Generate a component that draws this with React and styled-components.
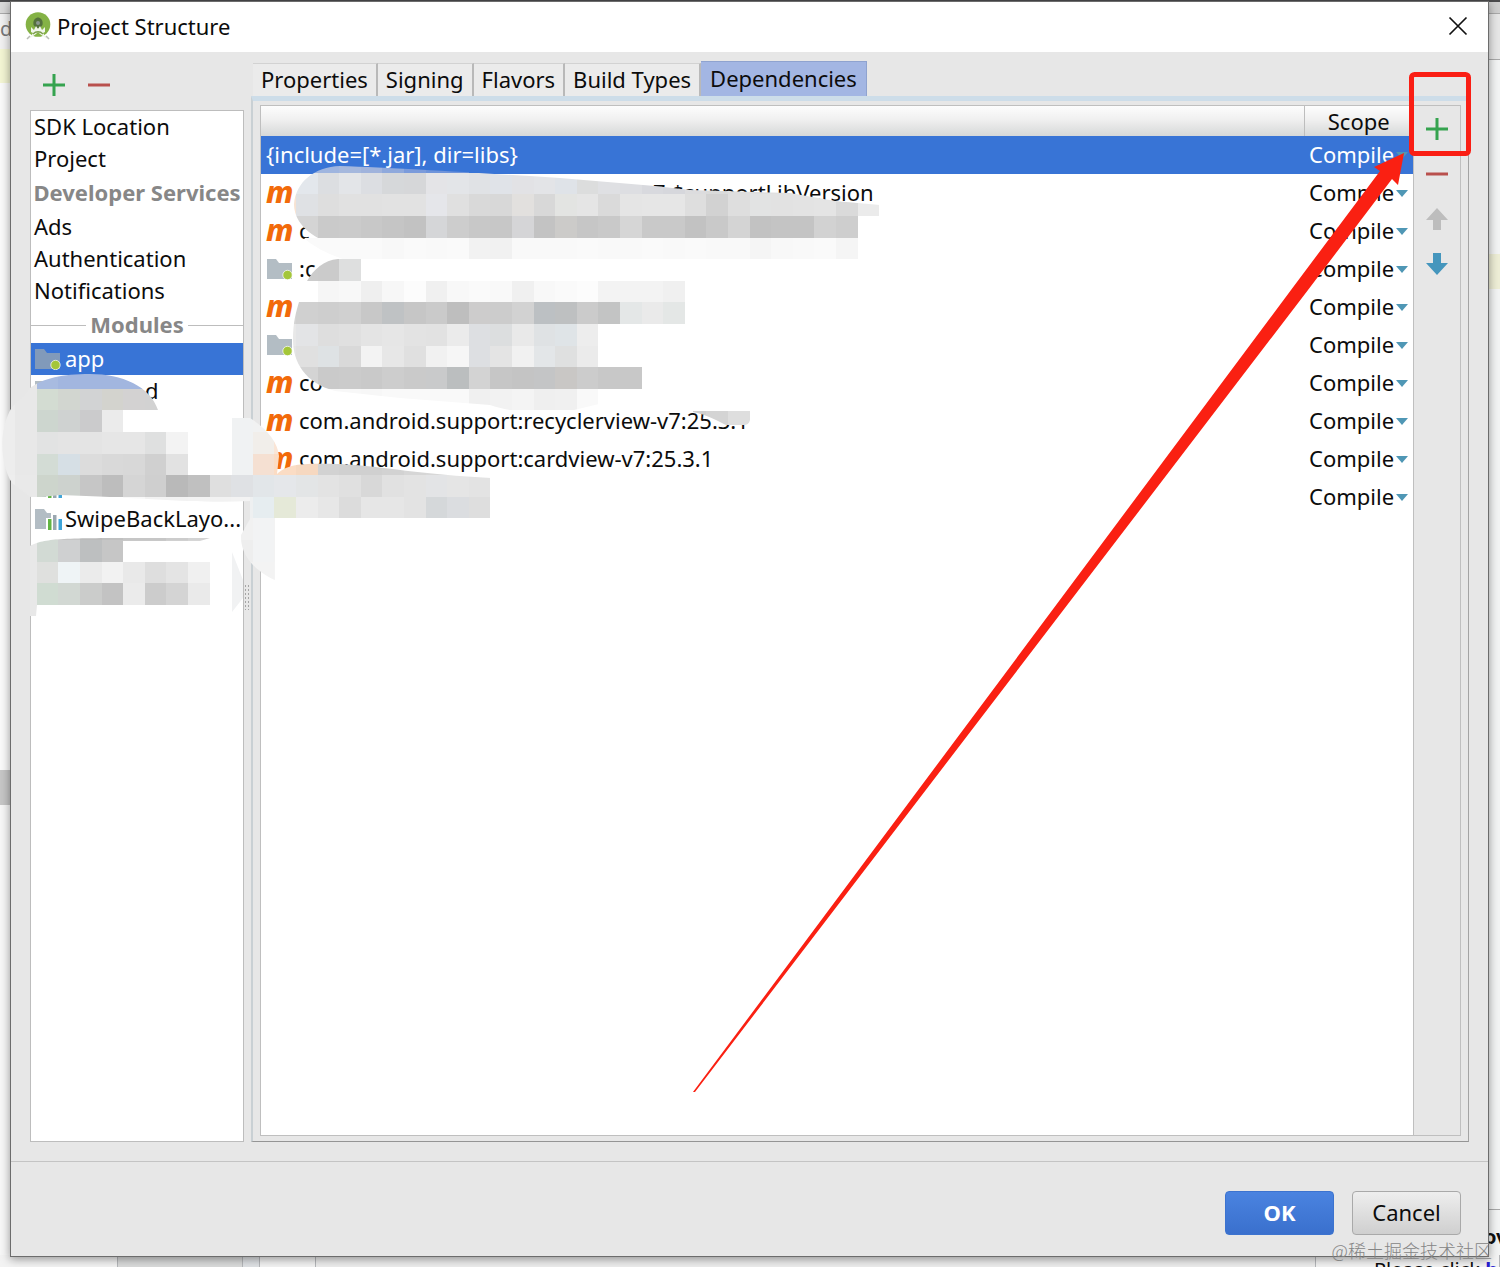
import styled, { createGlobalStyle, css } from "styled-components";
import { useState } from "react";

const CELL = 21.6;
const CELL_LEFT = 36.8;

const tabs = ["Properties", "Signing", "Flavors", "Build Types", "Dependencies"];

const services = ["Ads", "Authentication", "Notifications"];

const modules = [
  { id: "app", name: "app", icon: "app" },
  { id: "hidden-1", name: "d", icon: "lib", indent: 80 },
  { id: "hidden-2" },
  { id: "hidden-3" },
  { id: "hidden-4", icon: "lib" },
  { id: "swipe", name: "SwipeBackLayo...", icon: "lib" },
];

const dependencies = [
  { id: 0, name: "{include=[*.jar], dir=libs}" },
  { id: 1, name: "7:$supportLibVersion", icon: "maven", indent: 354 },
  { id: 2, name: "c", icon: "maven" },
  { id: 3, name: ":c", icon: "app" },
  { id: 4, icon: "maven" },
  { id: 5, icon: "app" },
  { id: 6, name: "co", icon: "maven" },
  { id: 7, name: "com.android.support:recyclerview-v7:25.3.1", icon: "maven" },
  { id: 8, name: "com.android.support:cardview-v7:25.3.1", icon: "maven" },
  { id: 9 },
];

// each row: [grid row, first grid column, shades]
const smudges = [
  {
    id: "deps-top",
    clip: "M318 238 C300 228 294 215 294 204 C296 182 314 167 340 166 C400 168 480 173 560 178 L655 186 L690 190 L790 193 L835 201 L880 205 V216 H858 V260 H345 C328 254 312 246 304 238 Z",
    rows: [
      [7, 12, "9fb5df 9fb5df a5b8dd a0b3dc 8fa9dc 7b9bdb 6f94da 6f94da"],
      [8, 11, "f2e6dc e3e7ec dcdee1 e3e5e8 dcdee2 d6d8da d6d7d9 e4e4e7 e3e5e8 e0e2e5 e0e3e8 e2e2e5 e3e4e7 dfe3e8 dcdddd dfe0e3 dddee2 d8d9de d6d7dc dcdcde dadbdb dedede e0e0e0 e0e0e0 e2e2e2 e2e2e2"],
      [9, 11, "f7e3d3 dfe1e4 dedede e1e1e1 e1e1e1 e2e2e2 e2e2e2 e5e6ea e0e0e0 d9d9d9 d8d8d8 e2e0de d8d8d8 e3e4e2 e5e5e5 dadada e5e5e5 e6e6e6 e6e6e6 dedede d2d2d2 dedede e2e3e3 e2e2e2 e3e3e3 e4e4e4 dadada ebebeb"],
      [10, 11, "dddddd d4d4d4 cacaca cbcbcb c8c8c8 c5c5c5 c2c2c2 d5d6d8 cdcdcd c8c8c8 c7c7c7 d5d5d7 c3c3c3 cccbc9 c6c6c6 c9c9c9 d6d6d6 c9c9c9 c9c9c9 c2c2c2 c9c9c9 d4d4d4 c2c2c2 c4c4c4 c4c4c4 d2d2d2 cecece"],
      [11, 12, "fafafa fafafa fafafa fafafa f8f8f8 fafafa f9f9f9 fafafa f2f2f2 f1f1f1 f9f9f9 f9f9f9 f9f9f9 fafafa f9f9f9 f9f9f9 fafafa f9f9f9 fafafa f9f9f9 f9f9f9 f5f5f5 f8f8f8 f9f9f9 fafafa f5f5f5"],
    ],
  },
  {
    id: "deps-folder",
    clip: "M307 281 C313 270 324 260 338 259 H361 V281 Z",
    rows: [[12, 12, "cccccc cbcbcb dedfdf"]],
  },
  {
    id: "deps-middle",
    clip: "M317 281 H685 V324 H599 V367 H642 V389 H599 V404 L570 411 C540 415 510 412 490 405 L400 398 L335 391 C305 383 293 362 293 340 C293 322 296 312 299 302 H317 Z",
    rows: [
      [13, 13, "f6f6f6 f8f8f8 efefef f7f7f7 fcfcfc f0f0f0 f8f8f8 fafafa f9f9f9 f0f0f0 f8f8f8 fafafa fcfcfc f3f3f3 f3f3f3 f3f3f3 f0f0f0"],
      [14, 11, "d4d4d4 d0d0d0 cecece d0d0d0 c8c8c8 bfc2c4 c6c6c6 cacaca bebebe cdcccc cccccc d2d2d2 bcc0c3 bec0c1 cbcbcb c3c4c4 e4e7e7 eaeaea e4e7e6"],
      [15, 11, "e8e8e8 e3e4e6 dedede e0e0e0 e4e4e4 e6e6e6 e3e3e3 e2e2e2 ebebeb dddfe2 dcdedf e9e9e9 dfe2e4 dfe4e7 ededed"],
      [16, 11, "e4e4e4 e0e0e0 dee2e4 d9d9d9 f3f3f3 e7e7e7 e0e0e0 f1f1f1 f6f6f6 dddfe2 e4e4e4 f1f1f1 e3e6e8 dfe0e0 ebebeb"],
      [17, 11, "dadada d4d4d4 cacaca cbcbcb c9c9c9 cdcdcd cacaca c9cacb bbbebf d3d3d3 c6c6c6 c4c4c4 c4c5c6 c9c7c5 cccccc c8c8c8 c8c8c8"],
      [18, 13, "f8f8f8 f8f8f8 f7f7f7 f9f9f9 f9f9f9 f9f9f9 f9f9f9 f0f0f0 f2f2f2 f4f4f4 efefef f0f0f0 f9f9f9"],
    ],
  },
  {
    id: "deps-version",
    clip: "M693 411 H750 V420 C749 424 747 425 743 425 H726 C718 421 708 415 693 412 Z",
    rows: [[19, 30, "cfcfcf d4d4d4 dedede dedede"]],
  },
  {
    id: "deps-bottom",
    clip: "M232 418 H250 C266 428 278 442 279 456 L277 474 C288 464 300 463 340 464 C380 466 425 475 491 478 V518 H275 V580 C262 574 240 560 241 535 L250 519 V501 L210 499 V475 H232 Z",
    rows: [
      [19, 9, "f0f2f3 f1f2f2 f6e8da"],
      [20, 9, "f0f2f3 f1eeea fae5d6"],
      [21, 9, "f0f2f3 f5e0d2 fbdcc4 f6d8c0 d2d2d2 d0d0d0 d0d0d0 d2d2d2 d6d6d6 d8d8d8"],
      [22, 8, "dfdfdf dfe1e4 e2e6e9 e5e7ea e3e5e6 e3e3e3 e0e0e0 d8d8d8 e1e1e1 e3e3e3 e3e4e6 e5e5e5 e3e3e3"],
      [23, 8, "f4f4f4 eef0f1 e6edf0 e5e9d8 ececec e7e7e7 dcdcdc e6e6e6 e6e6e6 e3e3e3 d5d8da dbdde0 dedede"],
      [24, 9, "f1f1f1 f2f3f4 f3f3f3"],
      [25, 9, "eeeeee f2f3f4 f3f3f3"],
      [26, 9, "f1f1f1 f3f3f3 f4f4f4"],
    ],
  },
  {
    id: "modules-top",
    clip: "M30 388 C44 378 62 374 90 374 C122 374 150 386 158 410 H123 V432 H188 V475 H250 V501 C200 504 150 498 60 495 L32 498 L12 483 C-1 462 -1 428 12 407 L28 392 Z",
    rows: [
      [17, -2, "e8e8e8 e8e8e8 a8bbe0 a2b6df a2b6df a2b6df a2b6df a6b9e0"],
      [18, -2, "ebebeb e8e8e8 d3dcd2 d2d6d0 d2d3d4 d3d3ce d3d2d2 d2d2d2"],
      [19, -2, "ededed e8e8e8 cdd6cf cfd2d1 cbcbcc ebebeb"],
      [20, -2, "ededed e8e8e8 e2e3e3 e4e4e4 e4e4e4 e6e6e6 e6e6e6 dfe0e0 f3f3f3"],
      [21, -2, "ededed e8e8e8 d3dcd5 d6dfe5 dcdcdc d9d9d9 d8d8d8 d0d0d0 e2e2e2"],
      [22, -2, "eeeeee e9e9e9 cdd5cc cdd2ce c6c6c6 bdbdbd d5d5d5 cfcfcf b9b9b9 c0c0c0 dfdfdf dfe1e4"],
      [23, 4, "f8f8f8 f2f2f2 f2f2f2 f3f3f3 f2f2f2 f3f3f3"],
    ],
  },
  {
    id: "modules-bottom",
    clip: "M30 546 C42 539 60 538 130 538 H210 L200 541 H123 V562 H210 V605 H37 L36 616 H30 Z",
    rows: [
      [24, -1, "e8e8e8 c8cdc9 c5c5c5 bbbbbb c0c0c0 c6c6c6 c6c6c6 cccccc d3d3d3"],
      [25, -1, "e8e8e8 d2dad4 cfd0d1 bdbfc0 c6c6c6 c8c8c8 c8c8c8 d0d0d0 d6d6d6"],
      [26, -1, "e8e8e8 dfe0de eff4f6 ebebeb f2f2f2 e9e9e9 dedede e4e4e4 f0f0f0"],
      [27, -1, "e8e8e8 d0dcd2 d2d8d3 cbcccb c3c3c3 ebebeb cccccc d4d4d4 eaeaea"],
      [28, -1, "e8e8e8"],
    ],
  },
  {
    id: "modules-edge",
    clip: "M232 552 L243 580 V598 L232 612 Z",
    rows: [
      [25, 9, "f1f2f3"],
      [26, 9, "f1f2f3"],
      [27, 9, "f1f2f3"],
      [28, 9, "f1f2f3"],
    ],
  },
];

export default function App() {
  const [activeTab, setActiveTab] = useState("Dependencies");
  const [activeModule, setActiveModule] = useState("app");
  const [activeRow, setActiveRow] = useState(0);

  return (
    <Desktop>
      <GlobalStyle />
      <Backdrop />
      <Dialog>
        <TitleBar>
          <StudioIcon />
          <Title>Project Structure</Title>
          <CloseButton aria-label="Close">
            <svg width="20" height="20" viewBox="0 0 20 20" stroke="#111" strokeWidth="1.7">
              <path d="M1.5 1.5 L18.5 18.5 M18.5 1.5 L1.5 18.5" />
            </svg>
          </CloseButton>
        </TitleBar>

        <Content>
          <Sidebar>
            <SidebarTools>
              <IconButton aria-label="Add module">
                <PlusIcon />
              </IconButton>
              <IconButton aria-label="Remove module">
                <MinusIcon />
              </IconButton>
            </SidebarTools>
            <ModuleList>
              <li>
                <ModuleItem>
                  <Label>SDK Location</Label>
                </ModuleItem>
              </li>
              <li>
                <ModuleItem>
                  <Label>Project</Label>
                </ModuleItem>
              </li>
              <GroupHeading>
                <Label>Developer Services</Label>
              </GroupHeading>
              {services.map(service => (
                <li key={service}>
                  <ModuleItem>
                    <Label>{service}</Label>
                  </ModuleItem>
                </li>
              ))}
              <GroupHeading $ruled>
                <Label>Modules</Label>
              </GroupHeading>
              {modules.map(module => (
                <li key={module.id}>
                  <ModuleItem
                    aria-label={module.name ? undefined : "Module"}
                    $selected={module.id === activeModule}
                    onClick={() => setActiveModule(module.id)}
                  >
                    {module.icon && <ItemIcon type={module.icon} />}
                    <Label $indent={module.indent}>{module.name}</Label>
                  </ModuleItem>
                </li>
              ))}
            </ModuleList>
          </Sidebar>

          <Splitter>
            <Grip />
          </Splitter>

          <Main>
            <TabList role="tablist">
              {tabs.map(tab => (
                <Tab
                  key={tab}
                  role="tab"
                  aria-selected={tab === activeTab}
                  $active={tab === activeTab}
                  onClick={() => setActiveTab(tab)}
                >
                  {tab}
                </Tab>
              ))}
            </TabList>
            <Panel>
              <PanelInner>
                <TableArea>
                  <Table>
                    <thead>
                      <tr>
                        <HeadCell aria-label="Dependency" />
                        <HeadCell $scope>Scope</HeadCell>
                      </tr>
                    </thead>
                    <tbody>
                      {dependencies.map(dep => (
                        <Row
                          key={dep.id}
                          $selected={dep.id === activeRow}
                          onClick={() => setActiveRow(dep.id)}
                        >
                          <Cell>
                            <Dependency>
                              {dep.icon && <ItemIcon type={dep.icon} />}
                              <Label $indent={dep.indent}>{dep.name}</Label>
                            </Dependency>
                          </Cell>
                          <Cell>
                            <ScopeField>
                              <ScopeSelect aria-label="Scope" defaultValue="Compile">
                                <option>Compile</option>
                              </ScopeSelect>
                              <svg width="12" height="7" viewBox="0 0 12 7">
                                <path d="M0 0 H12 L6 7 Z" fill="#4f97b5" />
                              </svg>
                            </ScopeField>
                          </Cell>
                        </Row>
                      ))}
                    </tbody>
                  </Table>
                </TableArea>
                <TableTools>
                  <IconButton aria-label="Add dependency">
                    <PlusIcon />
                  </IconButton>
                  <IconButton aria-label="Remove dependency">
                    <MinusIcon />
                  </IconButton>
                  <IconButton aria-label="Move up">
                    <ArrowIcon color="#bdbdbd" />
                  </IconButton>
                  <IconButton aria-label="Move down">
                    <ArrowIcon color="#4596bd" down />
                  </IconButton>
                </TableTools>
              </PanelInner>
            </Panel>
          </Main>
        </Content>

        <Footer>
          <FooterButton $primary>OK</FooterButton>
          <FooterButton>Cancel</FooterButton>
        </Footer>
      </Dialog>

      <Smudges />
      <Annotation />
      <Watermark>@稀土掘金技术社区</Watermark>
    </Desktop>
  );
}

function Backdrop() {
  return (
    <BackdropLayer aria-hidden="true">
      <TopStrip />
      <BackdropSides>
        <LeftStrip>
          <Block $h={12} $color="#dadada" $line />
          <Block $h={35} $color="#f1f1f1">
            <EdgeText>de</EdgeText>
          </Block>
          <Block $h={34} $color="#f3f5d3" />
          <Block $h={687} $color="#fafafa" />
          <Block $h={35} $color="#c6c6c6" />
        </LeftStrip>
        <RightStrip>
          <Block $h={12} $color="#cfcfcf" $line />
          <Block $h={46} $color="#e6e6e6" $line />
          <Block $h={194} $color="#f3f4f4" />
          <Block $h={35} $color="#eeeed6" />
          <Block $h={921} $color="#f3f4f4" $line />
          <EdgeText $bold>ov</EdgeText>
        </RightStrip>
      </BackdropSides>
      <BottomStrip>
        <Segment $w={118} $color="#f3f3f3" />
        <Segment $w={125} $color="#dadbdb" />
        <Segment $w={17} $color="#dfe2e5" />
        <Segment $w={56} $color="#f3f3f3" />
        <Segment $grow $color="#ededed" />
        <Segment $w={184} $color="#f3f3f3">
          <HintText>
            Please click <b>here</b>
          </HintText>
        </Segment>
      </BottomStrip>
    </BackdropLayer>
  );
}

function Smudges() {
  return (
    <SmudgeLayer width="900" height="640" viewBox="0 0 900 640" aria-hidden="true">
      {smudges.map(smudge => (
        <g key={smudge.id}>
          <clipPath id={smudge.id}>
            <path d={smudge.clip} />
          </clipPath>
          <g clipPath={`url(#${smudge.id})`} shapeRendering="crispEdges">
            {smudge.rows.map(([row, col, shades]) =>
              shades
                .split(" ")
                .map((shade, i) => (
                  <rect
                    key={`${row}-${i}`}
                    x={CELL_LEFT + (col + i) * CELL}
                    y={row * CELL}
                    width={CELL}
                    height={CELL}
                    fill={`#${shade}`}
                  />
                ))
            )}
          </g>
        </g>
      ))}
    </SmudgeLayer>
  );
}

function Annotation() {
  return (
    <AnnotationLayer width="820" height="1110" viewBox="680 0 820 1110" aria-hidden="true">
      <rect x="1411.5" y="74.5" width="57" height="79" rx="3" fill="none" stroke="#fa1e14" strokeWidth="5" />
      <path
        d="M693 1092 L1291 290 L1380 171 L1374 167 L1404 153 L1398 185 L1392 179 L1308 290 L695 1092 Z"
        fill="#fa2012"
      />
    </AnnotationLayer>
  );
}

function ItemIcon({ type }) {
  if (type === "maven") return <MavenMark>m</MavenMark>;
  return (
    <svg width="28" height="22" viewBox="0 0 28 22">
      <path d="M1 1 H10 L13 5 H26 V21 H1 Z" fill="#9aa7b0" fillOpacity="0.75" />
      {type === "app" ? (
        <circle cx="21.5" cy="17" r="4.7" fill="#a4c639" stroke="#fff" strokeOpacity="0.7" />
      ) : (
        <>
          <path d="M12 10 H17 V5 H28 V22 H12 Z" fill="#fff" />
          <path d="M14 11 H17.5 V22 H14 Z" fill="#62b543" />
          <path d="M19 7 H22.5 V22 H19 Z" fill="#9aa7b0" />
          <path d="M24.5 11 H28 V22 H24.5 Z" fill="#40a5d8" />
        </>
      )}
    </svg>
  );
}

function PlusIcon() {
  return (
    <svg width="22" height="22" viewBox="0 0 22 22">
      <path d="M9.5 0 H12.5 V9.5 H22 V12.5 H12.5 V22 H9.5 V12.5 H0 V9.5 H9.5 Z" fill="#35a34f" />
    </svg>
  );
}

function MinusIcon() {
  return (
    <svg width="22" height="22" viewBox="0 0 22 22">
      <path d="M0 9.5 H22 V12.5 H0 Z" fill="#b9504d" />
    </svg>
  );
}

function ArrowIcon({ color, down }) {
  return (
    <svg width="22" height="22" viewBox="0 0 22 22">
      <path
        d={down ? "M7 0 H15 V10 H22 L11 22 L0 10 H7 Z" : "M7 22 H15 V12 H22 L11 0 L0 12 H7 Z"}
        fill={color}
      />
    </svg>
  );
}

function StudioIcon() {
  return (
    <svg width="26" height="28" viewBox="0 0 26 28">
      <circle cx="13" cy="12.5" r="12.3" fill="#84b245" />
      <path d="M8.5 13 C7.5 7.5 11 5.5 13 5.5 C15 5.5 18.5 7.5 17.5 13 L15 16 H11 Z" fill="#54713d" />
      <circle cx="13" cy="11" r="2" fill="#8a9790" />
      <path
        d="M11 14 L13 17 L15 14 L17 18 L20 15 V20 L18 21 L22 27 L15 22 L13 20 L11 22 L4 27 L8 21 L6 20 V15 L9 18 Z"
        fill="#f1f6ec"
      />
      <path d="M8 22 C11 19 15 19 18 22" fill="none" stroke="#7ea04d" strokeWidth="1.4" />
      <path d="M2 27 L5 24 M24 27 L21 24" stroke="#b8bcb4" strokeWidth="1.5" />
    </svg>
  );
}

const GlobalStyle = createGlobalStyle`
  * {
    box-sizing: border-box;
  }

  body {
    margin: 0;
    font-family: "Noto Sans", "Open Sans", sans-serif;
    font-size: 22px;
    line-height: 30px;
    color: #0c0c0c;
  }

  button, select {
    font: inherit;
    color: inherit;
    border: none;
    background: none;
    padding: 0;
    margin: 0;
  }

  svg {
    flex: none;
    display: block;
  }
`;

const Desktop = styled.div`
  position: relative;
  min-height: 100vh;
  padding: 1px 11px 10px 10px;
  display: flex;
  flex-direction: column;
  overflow: hidden;
`;

const BackdropLayer = styled.div`
  position: absolute;
  inset: 0;
  display: flex;
  flex-direction: column;
  font-size: 20px;
`;

const TopStrip = styled.div`
  flex: none;
  height: 2px;
  background: #4b4b4d;
`;

const BackdropSides = styled.div`
  flex: 1;
  min-height: 0;
  display: flex;
  justify-content: space-between;
`;

const LeftStrip = styled.div`
  width: 20px;
  overflow: hidden;
  background: #f7f7f7;
`;

const RightStrip = styled.div`
  width: 16px;
  overflow: hidden;
  background: #f3f4f4;
`;

const Block = styled.div`
  height: ${props => props.$h}px;
  background: ${props => props.$color};
  border-bottom: ${props => (props.$line ? "1px solid #a9a9a9" : "none")};
  overflow: hidden;
`;

const EdgeText = styled.span`
  display: block;
  color: #777;
  ${props =>
    props.$bold &&
    css`
      padding-top: 12px;
      font-weight: 700;
      color: #111;
    `}
`;

const BottomStrip = styled.div`
  flex: none;
  height: 12px;
  display: flex;
`;

const Segment = styled.div`
  flex: ${props => (props.$grow ? "1" : "none")};
  width: ${props => props.$w}px;
  border-right: 1px solid #b5b7ba;
  background: ${props => props.$color};
  overflow: hidden;
  white-space: nowrap;
`;

const HintText = styled.span`
  padding-left: 58px;

  b {
    color: #2a1fd0;
  }
`;

const Dialog = styled.div`
  position: relative;
  flex: 1;
  display: flex;
  flex-direction: column;
  border: 1px solid #6c6c6c;
  background: #e7e7e7;
  box-shadow: 0 2px 9px rgba(0, 0, 0, 0.4);
`;

const TitleBar = styled.header`
  height: 50px;
  padding: 0 20px 2px 14px;
  display: flex;
  align-items: center;
  background: #fff;
`;

const Title = styled.h1`
  flex: 1;
  margin: 0 0 0 6px;
  font-size: 22px;
  font-weight: 400;
`;

const CloseButton = styled.button`
  display: flex;
`;

const Content = styled.div`
  flex: 1;
  display: flex;
  padding: 0 19px 19px 19px;
`;

const Sidebar = styled.aside`
  flex: none;
  width: 214px;
  display: flex;
  flex-direction: column;
`;

const SidebarTools = styled.div`
  height: 58px;
  padding: 8px 0 0 13px;
  display: flex;
  align-items: center;
  gap: 23px;
`;

const IconButton = styled.button`
  display: flex;
`;

const ModuleList = styled.ul`
  flex: 1;
  margin: 0;
  padding: 0;
  list-style: none;
  border: 1px solid #bdbdbd;
  background: #fff;
`;

const ModuleItem = styled.button`
  width: 100%;
  height: 32px;
  padding: 0 3px;
  display: flex;
  align-items: center;
  gap: 3px;
  text-align: left;
  white-space: nowrap;
  ${props =>
    props.$selected &&
    css`
      background: #3874d6;
      color: #fff;
    `}
`;

const Label = styled.span`
  padding: 0 0 2px ${props => props.$indent || 0}px;
`;

const GroupHeading = styled.li`
  height: 36px;
  display: flex;
  align-items: center;
  justify-content: center;
  gap: 4px;
  font-weight: 700;
  color: #878787;
  white-space: nowrap;
  ${props =>
    props.$ruled &&
    css`
      &::before,
      &::after {
        content: "";
        flex: 1;
        height: 1px;
        background: #bdbdbd;
      }
    `}
`;

const Splitter = styled.div`
  flex: none;
  width: 7px;
  display: flex;
  align-items: center;
`;

const Grip = styled.div`
  width: 7px;
  height: 26px;
  background: radial-gradient(circle, #a5a5a5 1px, transparent 1px) 0 0 / 3px 4px;
`;

const Main = styled.main`
  flex: 1;
  min-width: 0;
  display: flex;
  flex-direction: column;
`;

const TabList = styled.div`
  height: 44px;
  padding-left: 2px;
  display: flex;
  align-items: flex-end;
`;

const Tab = styled.button`
  height: 33px;
  padding: 0 8px 2px;
  border-top: 1px solid #d2d2d2;
  border-right: 2px solid #b9b9b9;
  background: #ebebeb;
  white-space: nowrap;
  ${props =>
    props.$active &&
    css`
      height: 35px;
      padding: 0 9px 3px;
      border-color: #8fa3cf;
      border-right-width: 1px;
      background: #a3b6e3;
    `}
`;

const Panel = styled.div`
  flex: 1;
  display: flex;
  padding: 4px 7px 5px 7px;
  border-top: 5px solid #cddde9;
  border-left: 2px solid #c9d0d4;
  border-right: 1px solid #a3a3a3;
  border-bottom: 1px solid #959595;
`;

const PanelInner = styled.div`
  flex: 1;
  display: flex;
  border: 1px solid #bfbfbf;
`;

const TableArea = styled.div`
  flex: 1;
  background: #fff;
  border-right: 1px solid #bfbfbf;
`;

const Table = styled.table`
  width: 100%;
  table-layout: fixed;
  border-collapse: collapse;
`;

const HeadCell = styled.th`
  height: 30px;
  padding: 0;
  background: linear-gradient(#fdfdfd, #f0f0f0 45%, #d6d8d8);
  font-weight: 400;
  ${props =>
    props.$scope &&
    css`
      width: 109px;
      border-left: 1px solid #bdbdbd;
    `}
`;

const Row = styled.tr`
  height: 38px;
  ${props =>
    props.$selected &&
    css`
      background: #3874d6;
      color: #fff;
    `}
`;

const Cell = styled.td`
  padding: 0 5px;
`;

const Dependency = styled.div`
  display: flex;
  align-items: center;
  gap: 5px;
  white-space: nowrap;
`;

const MavenMark = styled.span`
  width: 28px;
  padding-bottom: 2px;
  font-size: 30px;
  font-style: italic;
  font-weight: 800;
  color: #f26a0a;
`;

const ScopeField = styled.div`
  display: flex;
  align-items: center;
  justify-content: space-between;
`;

const ScopeSelect = styled.select`
  appearance: none;
  padding-bottom: 2px;
`;

const TableTools = styled.div`
  width: 46px;
  padding-top: 12px;
  display: flex;
  flex-direction: column;
  align-items: center;
  gap: 23px;
`;

const Footer = styled.footer`
  height: 95px;
  padding: 7px 27px 0;
  display: flex;
  align-items: center;
  justify-content: flex-end;
  gap: 18px;
  border-top: 1px solid #c4c4c4;
`;

const FooterButton = styled.button`
  width: 109px;
  height: 44px;
  padding-bottom: 2px;
  border: 1px solid #a9a9a9;
  border-radius: 4px;
  background: linear-gradient(#eeeeee, #cfcfcf);
  ${props =>
    props.$primary &&
    css`
      border-color: #3c73cf;
      background: linear-gradient(#4a83e0, #3a70cd);
      color: #fff;
      font-weight: 700;
    `}
`;

const SmudgeLayer = styled.svg`
  position: absolute;
  top: 0;
  left: 0;
  pointer-events: none;
`;

const AnnotationLayer = styled.svg`
  position: absolute;
  top: 0;
  right: 0;
  pointer-events: none;
`;

const Watermark = styled.p`
  position: absolute;
  right: 8px;
  bottom: 2px;
  margin: 0;
  font-family: "Noto Sans CJK SC", sans-serif;
  font-size: 18px;
  font-weight: 300;
  color: #858585;
`;
